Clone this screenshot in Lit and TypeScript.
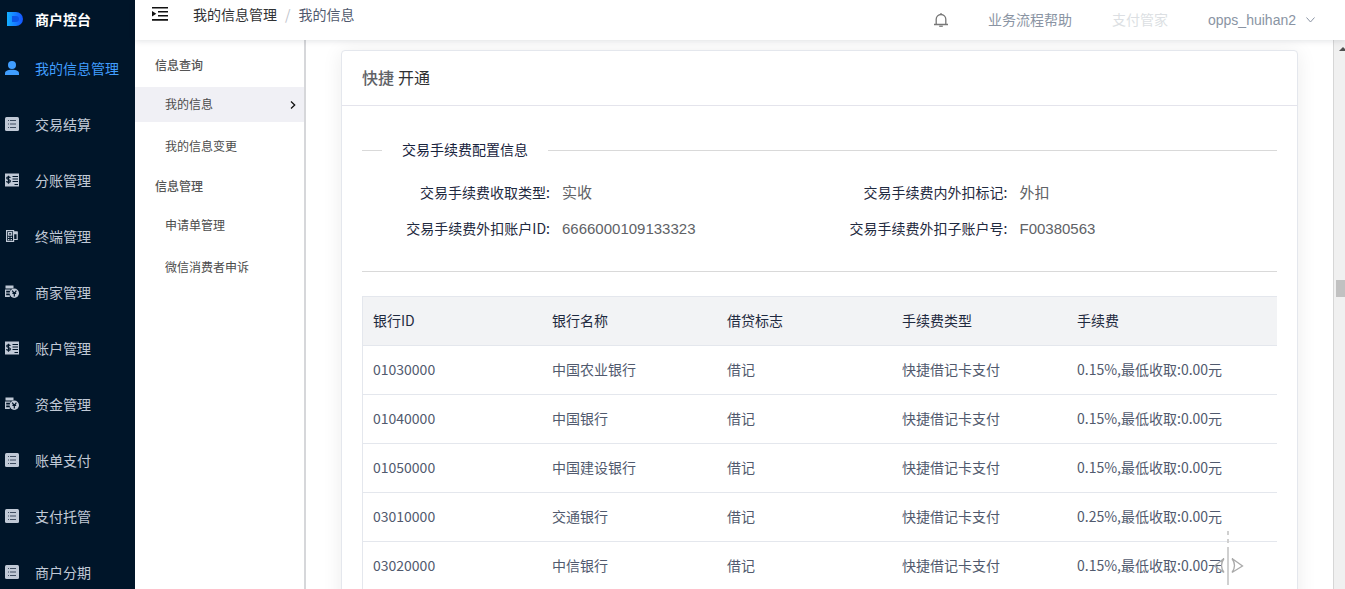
import { LitElement, html, css, svg } from "lit";
import { customElement } from "lit/decorators.js";
import { classMap } from "lit/directives/class-map.js";

const icons: Record<string, unknown> = {
  user: svg`<circle cx="7" cy="4" r="4"/><path d="M0 14v-1.500C0 10 2.500 8.800 7 8.800S14 10 14 12.500V14z"/>`,
  list: svg`<path d="M1.500 0h11Q14 0 14 1.500v11q0 1.500-1.500 1.500h-11Q0 14 0 12.500v-11Q0 0 1.500 0z"/><path fill="#3f4d60" d="M3 3h1v1H3zM5 3h6v1H5zM3 6.500h1v1H3zM5 6.500h6v1H5zM3 10h1v1H3zM5 10h6v1H5z"/>`,
  money: svg`<path d="M0 .500h14v13H0z"/><g fill="none" stroke="#001529"><path stroke-width="1.200" d="M5.300 4.900C5 3.500 1.700 3.500 1.700 5.100c0 1.800 3.700 1.100 3.700 3 0 1.700-3.600 1.700-3.900 0M3.500 2.700v8"/><path stroke-width="1" d="M7.500 3.500H13M7.500 6H13M7.500 8.500H13M9.500 11.500H13"/></g>`,
  terminal: svg`<g fill="none" stroke="currentColor" stroke-width="1.200"><path d="M1.600 1.600h7v10.800h-7zM3.500 3.600h3.200v2.600H3.500z"/><path d="M8.600 3h3.600v7.500H8.600"/></g><path d="M3 7.700h1.400V9H3zM5.600 7.700H7V9H5.600zM3 10h1.400v1.300H3zM5.600 10H7v1.300H5.600zM9 2.600h3.400v2.600H9z"/>`,
  shop: svg`<path d="M.500 .500h8v3h-8zM0 4.500h5.500v1.200H1.200v1.700h3.600v1.100H1.200v1.800h3.600v1.700H0z"/><circle cx="9.300" cy="8.300" r="4.700"/><path d="M7.200 5.600l2.100 2.700 2.100-2.700M9.300 8v3.500M7.400 8.300h3.800" fill="none" stroke="#001529" stroke-width="1.200"/>`,
};

const menu = [
  ["user", "我的信息管理"],
  ["list", "交易结算"],
  ["money", "分账管理"],
  ["terminal", "终端管理"],
  ["shop", "商家管理"],
  ["money", "账户管理"],
  ["shop", "资金管理"],
  ["list", "账单支付"],
  ["list", "支付托管"],
  ["list", "商户分期"],
];

const groups = [
  { title: "信息查询", items: ["我的信息", "我的信息变更"] },
  { title: "信息管理", items: ["申请单管理", "微信消费者申诉"] },
];

const fields = [
  ["交易手续费收取类型:", "实收"],
  ["交易手续费内外扣标记:", "外扣"],
  ["交易手续费外扣账户ID:", "6666000109133323"],
  ["交易手续费外扣子账户号:", "F00380563"],
];

const columns = ["银行ID", "银行名称", "借贷标志", "手续费类型", "手续费"];

const rows = [
  ["01030000", "中国农业银行", "0.15%"],
  ["01040000", "中国银行", "0.15%"],
  ["01050000", "中国建设银行", "0.15%"],
  ["03010000", "交通银行", "0.25%"],
  ["03020000", "中信银行", "0.15%"],
];

@customElement("app-root")
export class AppRoot extends LitElement {
  static styles = css`
    :host {
      display: flex;
      height: 100vh;
      overflow: hidden;
      position: relative;
      background: #fff;
      color: #606266;
      font: 14px/20px "Noto Sans CJK SC", sans-serif;
    }
    * { box-sizing: border-box; }
    a { color: inherit; text-decoration: none; }
    button { border: 0; padding: 0; background: none; color: inherit; font: inherit; display: flex; align-items: center; }
    svg { display: block; flex: none; }
    h1, h2, h3, ul, dl, dd { margin: 0; padding: 0; font-size: inherit; }
    ul { list-style: none; }

    .side { flex: none; width: 135px; background: #001529; color: #c0c9d6; overflow: hidden; }
    .brand { display: flex; align-items: center; gap: 12px; height: 40px; padding: 0 0 3px 7px; color: #fff; }
    .menu a { display: flex; align-items: center; gap: 16px; height: 56px; padding-left: 5px; }
    .menu a.active { color: #409eff; }

    .page { flex: 1; min-width: 0; display: flex; flex-direction: column; }
    .top { flex: none; position: relative; z-index: 2; display: flex; align-items: center; height: 40px; padding: 0 30px 0 17px; background: #fff; box-shadow: 0 1px 6px rgba(0, 21, 41, 0.12); color: #8a94a3; }
    .crumbs { display: flex; flex: 1; gap: 8px; margin-left: 25px; padding-bottom: 12px; color: #515a6e; }
    .crumbs a { color: #303133; }
    .crumbs span { color: #c0c4cc; }
    .fold { color: #111; padding-bottom: 12px; }
    .tools { display: flex; align-items: center; gap: 40px; }
    .tools a { padding-bottom: 2px; }
    .tools .faint { color: #dcdfe3; }
    .account { gap: 10px; font-family: "Liberation Sans", "Noto Sans CJK SC", sans-serif; }

    .body { flex: 1; min-height: 0; display: flex; }
    .sub { flex: none; width: 171px; border-right: 2px solid #d6d7da; padding-top: 3px; font-size: 12px; color: #515a6e; }
    .sub h2 { padding: 10px 20px; line-height: 24px; color: #555; font-weight: 500; }
    .sub ul { display: grid; gap: 7px; }
    .sub li a { display: flex; align-items: center; justify-content: space-between; height: 35px; padding: 0 8px 2px 30px; color: #4c4c4c; }
    .sub li a.active { background: #f0f0f5; }
    .sub li svg { margin-top: 2px; }

    .main { flex: 1; min-width: 0; padding: 10px 35px 0; overflow: hidden; }
    .card { min-height: 100vh; border: 1px solid #e4e7ed; border-radius: 4px; box-shadow: 0 2px 20px rgba(0, 0, 0, 0.08); background: #fff; }
    .card-head { display: flex; gap: 4px; padding: 14px 20px 16px; border-bottom: 1px solid #e4e4ec; font-size: 16px; line-height: 24px; font-weight: 400; color: #303133; }
    .card-head b { font-weight: 500; color: #606266; }
    .content { padding: 33px 20px 0; }
    .divider { display: flex; align-items: center; gap: 20px; color: #17233d; font-weight: 400; }
    .divider::before, .divider::after { content: ""; width: 20px; height: 1px; margin-top: 2px; background: #d9d9d9; }
    .divider::after { flex: 1; }
    .fields { display: grid; grid-template-columns: 1fr 1fr; padding: 16px 0 24px; border-bottom: 1px solid #d9d9d9; }
    .field { display: flex; align-items: center; height: 36px; gap: 12px; }
    .field dt { width: 188px; padding-bottom: 2px; text-align: right; color: #1f2a40; }
    .field dd { font-family: "Liberation Sans", "Noto Sans CJK SC", sans-serif; font-size: 15px; }
    table { width: 100%; margin-top: 24px; table-layout: fixed; border-collapse: separate; border-spacing: 0; border: 1px solid #e4e7ed; border-width: 1px 0 0 1px; text-align: left; color: #515a6e; }
    th, td { height: 49px; padding: 0 10px 2px; border-bottom: 1px solid #e4e7ed; font-weight: 400; }
    th { background: #f2f3f5; color: #1f2a40; }
    .c0 { width: 179px; }
    .c1 { width: 175px; }

    .rail { flex: none; width: 12px; overflow: hidden; border-left: 1px solid #d6d6d6; background: #f0f0f0; }
    .rail svg { margin: 7px 0 0 5px; }
    .thumb { height: 17px; margin: 229px 0 0 2px; background: #c1c1c1; }
    .handle { position: absolute; right: 101px; bottom: 4px; z-index: 3; }
  `;

  render() {
    return html`
      <aside class="side">
        <h1 class="brand">
          <svg width="16" height="14" viewBox="0 0 16 14">
            <defs><linearGradient id="g"><stop stop-color="#12b0ff"/><stop offset=".4" stop-color="#1688ff"/><stop offset="1" stop-color="#1453ff"/></linearGradient></defs>
            <path fill="url(#g)" d="M0 0h9a7 7 0 0 1 0 14H0z"/><path fill="#0b55e8" d="M5 4h4a3 3 0 0 1 0 6H5z"/>
          </svg>
          商户控台
        </h1>
        <nav class="menu">
          ${menu.map(([icon, label], i) => html`
            <a href="#" class=${classMap({ active: i === 0 })}>
              <svg width="14" height="14" viewBox="0 0 14 14" fill="currentColor">${icons[icon]}</svg>${label}
            </a>`)}
        </nav>
      </aside>
      <div class="page">
        <header class="top">
          <button class="fold" aria-label="折叠菜单">
            <svg width="16" height="14" viewBox="0 0 16 14"><path fill="currentColor" d="M0 0h16v1.500H0zM6 4h10v1.500H6zM6 8h10v1.500H6zM0 12h16v1.700H0zM0 4l4.300 2.800L0 9.600z"/></svg>
          </button>
          <nav class="crumbs"><a href="#">我的信息管理</a><span>/</span>我的信息</nav>
          <div class="tools">
            <button aria-label="通知">
              <svg width="14" height="14" viewBox="0 0 14 14" fill="none" stroke="#777" stroke-width="1.300"><path d="M0 11.500h14M2.200 11.500V6.300a4.800 4.800 0 0 1 9.600 0v5.200M7 0v1.500"/><path d="M5.200 13.200h3.600"/></svg>
            </button>
            <a href="#">业务流程帮助</a>
            <a href="#" class="faint">支付管家</a>
            <button class="account">opps_huihan2
              <svg width="9" height="6" viewBox="0 0 9 6" fill="none" stroke="#8a94a3"><path d="M.500.500l4 4.500 4-4.500"/></svg>
            </button>
          </div>
        </header>
        <div class="body">
          <nav class="sub">
            ${groups.map((g, gi) => html`
              <h2>${g.title}</h2>
              <ul>${g.items.map((t, i) => html`
                <li><a href="#" class=${classMap({ active: gi + i === 0 })}>${t}
                  ${gi + i === 0 ? html`<svg width="6" height="8" viewBox="0 0 6 8" fill="none" stroke="#111" stroke-width="1.300"><path d="M1 .500L4.700 4 1 7.500"/></svg>` : ""}</a></li>`)}
              </ul>`)}
          </nav>
          <main class="main">
            <section class="card">
              <h2 class="card-head"><b>快捷</b>开通</h2>
              <div class="content">
                <h3 class="divider">交易手续费配置信息</h3>
                <dl class="fields">
                  ${fields.map(([k, v]) => html`<div class="field"><dt>${k}</dt><dd>${v}</dd></div>`)}
                </dl>
                <table>
                  <colgroup><col class="c0"><col class="c1"><col class="c1"><col class="c1"><col></colgroup>
                  <thead><tr>${columns.map((c) => html`<th scope="col">${c}</th>`)}</tr></thead>
                  <tbody>
                    ${rows.map(([id, name, rate]) => html`
                      <tr><td>${id}</td><td>${name}</td><td>借记</td><td>快捷借记卡支付</td><td>${rate},最低收取:0.00元</td></tr>`)}
                  </tbody>
                </table>
              </div>
            </section>
          </main>
          <div class="rail" aria-hidden="true">
            <svg width="8" height="4" viewBox="0 0 8 4"><path fill="#505050" d="M0 4l4-4 4 4z"/></svg>
            <div class="thumb"></div>
          </div>
        </div>
      </div>
      <svg class="handle" width="30" height="54" viewBox="0 0 30 54" fill="none" stroke="#aaa" aria-hidden="true">
        <path stroke="#d0d0d0" stroke-width="2" d="M14 0v4M14 8v4M14 16v38"/>
        <path stroke-width="1.300" d="M10 27.500L.500 35 10 41.500Q5 34.500 10 27.500zM18 27.500L28.500 35 18 41.500Q23 34.500 18 27.500z"/>
      </svg>
    `;
  }
}
